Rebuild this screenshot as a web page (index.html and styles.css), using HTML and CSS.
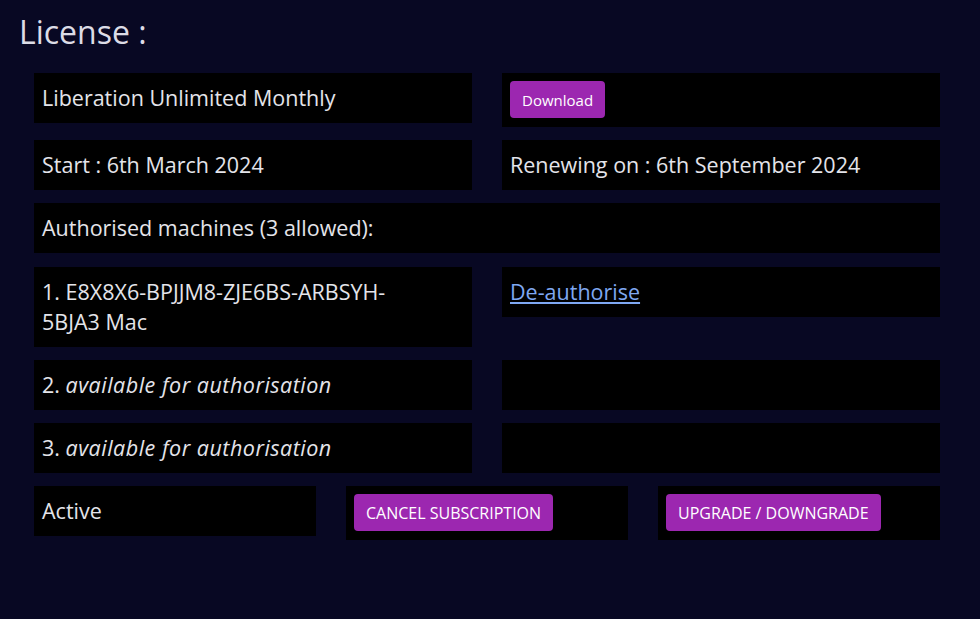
FILE: index.html
```html
<!DOCTYPE html>
<html lang="en">
<head>
<meta charset="utf-8">
<title>License</title>
<link rel="stylesheet" href="styles.css">
</head>
<body>
<main class="page">
  <h1 class="title">License :</h1>
  <section class="license">
    <div class="row">
      <div class="cell">Liberation Unlimited Monthly</div>
      <div class="cell cell-btn"><button class="btn">Download</button></div>
    </div>
    <div class="row">
      <div class="cell">Start : 6th March 2024</div>
      <div class="cell">Renewing on : 6th September 2024</div>
    </div>
    <div class="row">
      <div class="cell cell-full">Authorised machines (3 allowed):</div>
    </div>
    <div class="row">
      <div class="cell">1. E8X8X6-BPJJM8-ZJE6BS-ARBSYH-<span class="nowrap">5BJA3 Mac</span></div>
      <div class="cell"><a class="link" href="#">De-authorise</a></div>
    </div>
    <div class="row">
      <div class="cell">2. <em>available for authorisation</em></div>
      <div class="cell"></div>
    </div>
    <div class="row">
      <div class="cell">3. <em>available for authorisation</em></div>
      <div class="cell"></div>
    </div>
    <div class="row row-three">
      <div class="cell">Active</div>
      <div class="cell cell-btn"><button class="btn btn-upper">Cancel Subscription</button></div>
      <div class="cell cell-btn"><button class="btn btn-upper">Upgrade / Downgrade</button></div>
    </div>
  </section>
</main>
</body>
</html>
```

FILE: styles.css
```css
html, body {
  margin: 0;
  padding: 0;
  background: #080823;
  height: 100%;
}

body {
  font-family: "Open Sans", "DejaVu Sans", sans-serif;
  color: #e4e4ea;
}

.page {
  padding: 11px 0 0 19px;
}

.title {
  margin: 0;
  font-size: 32px;
  font-weight: 400;
  line-height: 42px;
  color: #dcdce6;
}

.license {
  width: 906px;
  margin: 20px 0 0 15px;
  display: flex;
  flex-direction: column;
  gap: 13.2px;
}

.row {
  display: grid;
  grid-template-columns: 1fr 1fr;
  column-gap: 30px;
  align-items: start;
}

.row-three {
  grid-template-columns: 1fr 1fr 1fr;
}

.cell {
  background: #000;
  min-height: 50px;
  box-sizing: border-box;
  padding: 10px 8px;
  font-size: 21.5px;
  line-height: 30px;
}

.cell-full {
  grid-column: 1 / -1;
}

.cell em {
  font-style: italic;
  letter-spacing: 0.5px;
}

.nowrap {
  white-space: nowrap;
}

.cell-btn {
  padding: 8px 8px 9px;
  line-height: normal;
}

.btn {
  display: inline-block;
  height: 37px;
  padding: 0 12px;
  border: none;
  border-radius: 4px;
  background: #9c27b0;
  color: #fff;
  font-family: "Open Sans", "DejaVu Sans", sans-serif;
  font-size: 15px;
  cursor: pointer;
}

.btn-upper {
  text-transform: uppercase;
  font-size: 16px;
}

.link {
  color: #7fa8f2;
  text-decoration: underline;
}
```
